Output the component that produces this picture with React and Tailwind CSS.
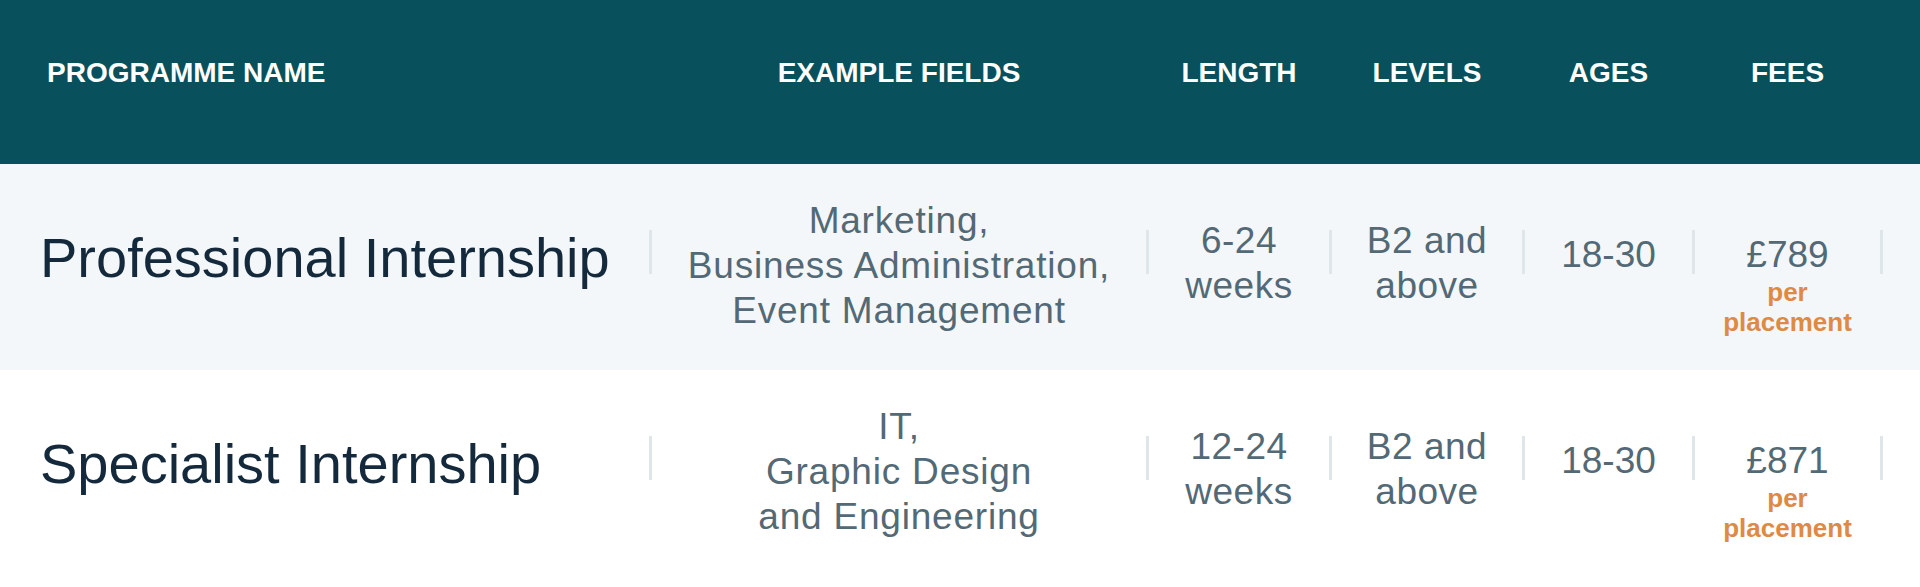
import React from 'react';

// Programme comparison table
const rows = [
  {
    name: 'Professional Internship',
    fields: ['Marketing,', 'Business Administration,', 'Event Management'],
    length: ['6-24', 'weeks'],
    levels: ['B2 and', 'above'],
    ages: '18-30',
    fee: '£789',
    bg: 'bg-[#f4f7f9]',
  },
  {
    name: 'Specialist Internship',
    fields: ['IT,', 'Graphic Design', 'and Engineering'],
    length: ['12-24', 'weeks'],
    levels: ['B2 and', 'above'],
    ages: '18-30',
    fee: '£871',
    bg: 'bg-white',
  },
];

const Divider = ({ hidden = false }) => (
  <div
    className={`w-[3px] shrink-0 ${hidden ? '' : 'h-[44px] mt-[66px] bg-[#dfe6ea]'}`}
  />
);

const Lines = ({ lines }) => (
  <>
    {lines.map((line) => (
      <div key={line}>{line}</div>
    ))}
  </>
);

function HeaderRow() {
  return (
    <div className="flex h-[164px] bg-[#08505c] text-white font-bold text-[28px] leading-[32px] uppercase">
      <div className="w-[649px] shrink-0 pl-[47px] pt-[57px]">Programme Name</div>
      <Divider hidden />
      <div className="w-[494px] shrink-0 pt-[57px] text-center">Example Fields</div>
      <Divider hidden />
      <div className="w-[180px] shrink-0 pt-[57px] text-center">Length</div>
      <Divider hidden />
      <div className="w-[190px] shrink-0 pt-[57px] text-center">Levels</div>
      <Divider hidden />
      <div className="w-[167px] shrink-0 pt-[57px] text-center">Ages</div>
      <Divider hidden />
      <div className="w-[185px] shrink-0 pt-[57px] text-center">Fees</div>
    </div>
  );
}

function ProgrammeRow({ row }) {
  return (
    <div className={`flex items-start h-[206px] ${row.bg}`}>
      <div className="w-[649px] shrink-0 pl-[40px] pt-[63px] text-[56px] leading-[62px] text-[#142a3c]">
        {row.name}
      </div>
      <Divider />
      <div className="w-[494px] shrink-0 pt-[34px] text-center text-[37px] leading-[45px] tracking-[0.8px] text-[#536975]">
        <Lines lines={row.fields} />
      </div>
      <Divider />
      <div className="w-[180px] shrink-0 pt-[54px] text-center text-[37px] leading-[45px] tracking-[0.5px] text-[#536975]">
        <Lines lines={row.length} />
      </div>
      <Divider />
      <div className="w-[190px] shrink-0 pt-[54px] text-center text-[37px] leading-[45px] tracking-[0.5px] text-[#536975]">
        <Lines lines={row.levels} />
      </div>
      <Divider />
      <div className="w-[167px] shrink-0 pt-[68px] text-center text-[37px] leading-[45px] text-[#536975]">
        {row.ages}
      </div>
      <Divider />
      <div className="w-[185px] shrink-0 pt-[68px] text-center">
        <div className="text-[37px] leading-[45px] text-[#536975]">{row.fee}</div>
        <div className="text-[26px] leading-[30px] font-bold text-[#de8a45]">
          <div>per</div>
          <div>placement</div>
        </div>
      </div>
      <Divider />
    </div>
  );
}

export default function App() {
  return (
    <div className="min-h-screen w-[1920px] bg-white font-['Liberation_Sans',Arial,sans-serif]">
      <HeaderRow />
      {rows.map((row) => (
        <ProgrammeRow key={row.name} row={row} />
      ))}
    </div>
  );
}
